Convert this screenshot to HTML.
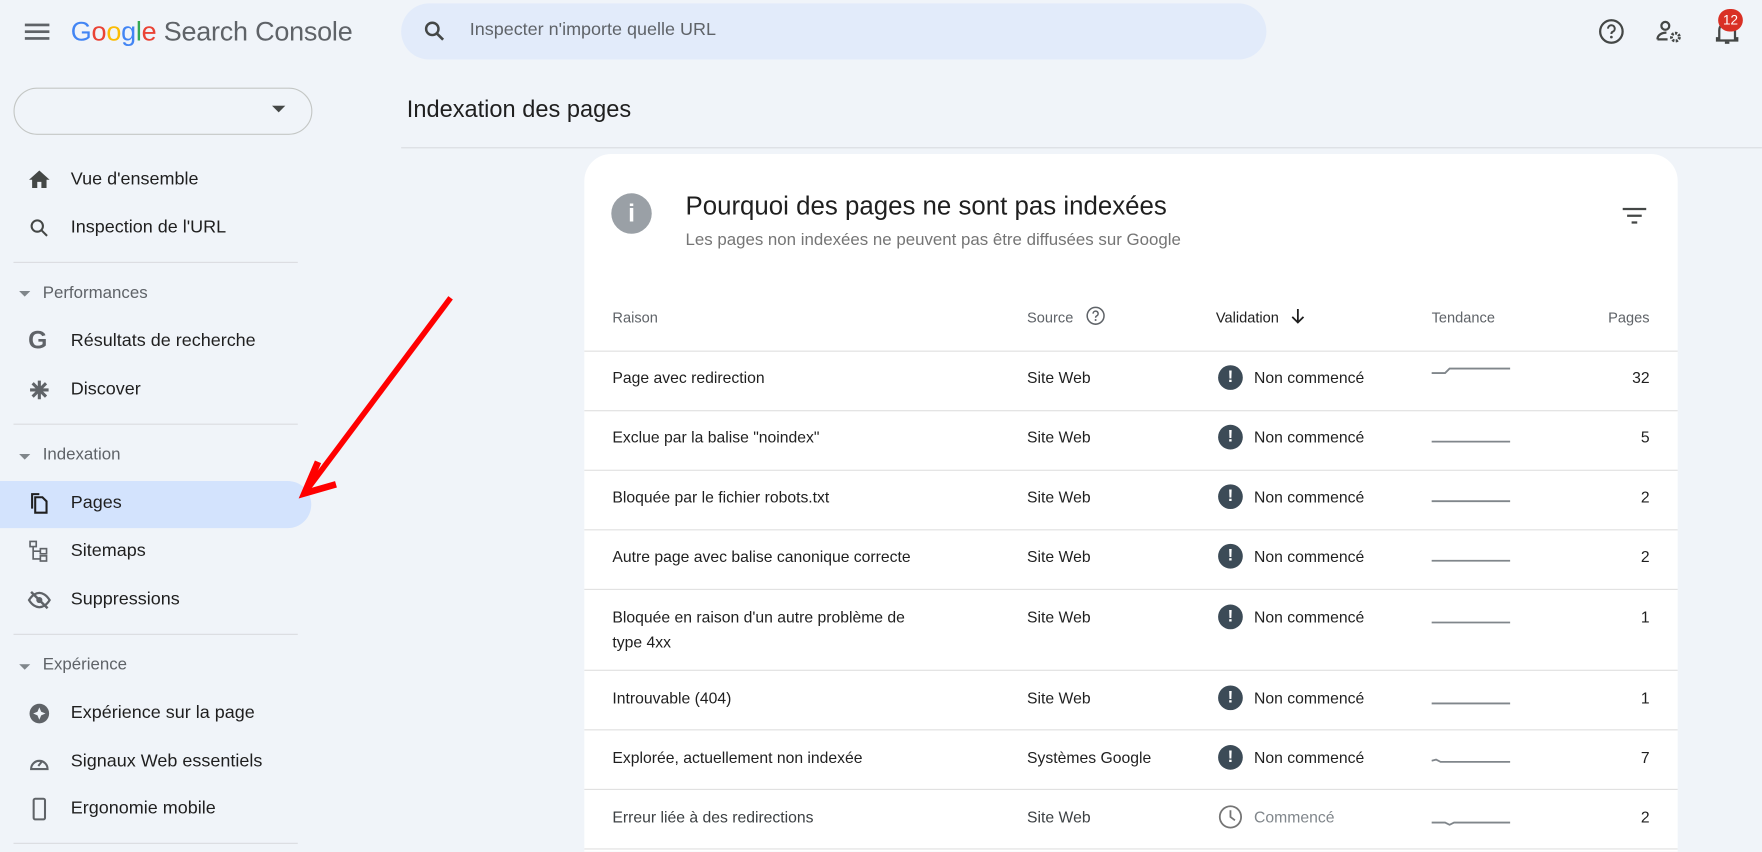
<!DOCTYPE html>
<html><head><meta charset="utf-8"><style>
html,body{margin:0;padding:0;width:1762px;height:852px;overflow:hidden;background:#f0f4f9;}
#w{position:absolute;left:0;top:0;width:1568px;height:758px;overflow:hidden;transform:scale(1.1237);transform-origin:0 0;font-family:"Liberation Sans",Arial,sans-serif;color:#1f1f1f;}
.a{position:absolute;white-space:nowrap;}
.nav{font-size:16px;color:#1f1f1f;}
.hdr{font-size:15px;color:#5f6368;}
.div{position:absolute;left:12px;width:253px;height:1px;background:#dadce0;}
.ic{position:absolute;left:24px;width:22px;height:22px;}
.row{position:absolute;left:520px;width:973px;height:1px;background:#e0e0e0;}
.t{font-size:14px;color:#1f1f1f;}
.bang{position:absolute;left:1084px;width:22px;height:22px;border-radius:50%;background:#3c4b57;color:#fff;font-weight:bold;font-size:15px;text-align:center;line-height:22px;}
.num{position:absolute;right:100px;font-size:14px;color:#1f1f1f;}
</style></head><body><div id="w">
<svg class="a" style="left:22px;top:19px" width="22" height="18"><g fill="#5f6368"><rect y="2" width="22" height="2.4"/><rect y="8" width="22" height="2.4"/><rect y="14" width="22" height="2.4"/></g></svg>
<div class="a" style="left:63px;top:15px;font-size:24px;letter-spacing:-0.2px"><span style="color:#4285f4">G</span><span style="color:#ea4335">o</span><span style="color:#fbbc05">o</span><span style="color:#4285f4">g</span><span style="color:#34a853">l</span><span style="color:#ea4335">e</span><span style="color:#5f6368"> Search Console</span></div>
<div class="a" style="left:357px;top:3px;width:770px;height:50px;border-radius:25px;background:#e2ebfa"></div>
<svg class="a" style="left:376px;top:17px" width="22" height="22" viewBox="0 0 24 24"><circle cx="9.5" cy="9.5" r="6" fill="none" stroke="#444746" stroke-width="2.4"/><path d="M14 14l6 6" stroke="#444746" stroke-width="2.6"/></svg>
<div class="a" style="left:418px;top:18px;font-size:16px;color:#5f6368">Inspecter n'importe quelle URL</div>
<svg class="a" style="left:1422px;top:16px" width="24" height="24" viewBox="0 0 24 24"><circle cx="12" cy="12" r="10" fill="none" stroke="#444746" stroke-width="2"/><path d="M9 9.5a3 3 0 1 1 4 2.8c-.8.4-1 1-1 2" fill="none" stroke="#444746" stroke-width="1.8"/><circle cx="12" cy="17" r="1.2" fill="#444746"/></svg>
<svg class="a" style="left:1473px;top:16px" width="26" height="24" viewBox="0 0 26 24"><circle cx="9" cy="7" r="3.5" fill="none" stroke="#444746" stroke-width="2"/><path d="M2 19c0-4 4-6 8-6" fill="none" stroke="#444746" stroke-width="2"/><path d="M2 19h9" stroke="#444746" stroke-width="2"/><circle cx="18" cy="17" r="3.5" fill="none" stroke="#444746" stroke-width="2.6" stroke-dasharray="2 1.2"/></svg>
<svg class="a" style="left:1526px;top:16px" width="22" height="24" viewBox="0 0 22 24"><path d="M4 18V11a7 7 0 0 1 14 0v7h2v2H2v-2z" fill="none" stroke="#444746" stroke-width="2"/><rect x="9" y="21" width="4" height="2" fill="#444746"/></svg>
<div class="a" style="left:1529px;top:8px;width:22px;height:20px;border-radius:10px;background:#d93025;color:#fff;font-size:12px;text-align:center;line-height:20px">12</div>
<div class="a" style="left:12px;top:78px;width:264px;height:40px;border:1px solid #c4c7c5;border-radius:21px"></div>
<svg class="a" style="left:242px;top:94px" width="12" height="7"><path d="M0 0h12L6 6z" fill="#444746"/></svg>
<svg class="ic" style="top:149px" viewBox="0 0 24 24"><path d="M10 20v-6h4v6h5v-8h3L12 3 2 12h3v8z" fill="#444746"/></svg>
<div class="a nav" style="left:63px;top:151px">Vue d'ensemble</div>
<svg class="ic" style="top:192px" viewBox="0 0 24 24"><circle cx="10" cy="10" r="5.5" fill="none" stroke="#444746" stroke-width="2"/><path d="M14 14l5.5 5.5" stroke="#444746" stroke-width="2"/></svg>
<div class="a nav" style="left:63px;top:194px">Inspection de l'URL</div>
<div class="div" style="top:233px"></div>
<svg class="a" style="left:17px;top:259px" width="10" height="6"><path d="M0 0h10L5 5z" fill="#80868b"/></svg>
<div class="a hdr" style="left:38px;top:252px">Performances</div>
<div class="a" style="left:25px;top:290px;font-size:22px;font-weight:bold;color:#5f6368">G</div>
<div class="a nav" style="left:63px;top:295px">Résultats de recherche</div>
<svg class="ic" style="top:336px" viewBox="0 0 24 24"><g stroke="#5f6368" stroke-width="3"><path d="M12 3v18M3 12h18M5.5 5.5l13 13M18.5 5.5l-13 13"/></g></svg>
<div class="a nav" style="left:63px;top:338px">Discover</div>
<div class="div" style="top:377px"></div>
<svg class="a" style="left:17px;top:404px" width="10" height="6"><path d="M0 0h10L5 5z" fill="#80868b"/></svg>
<div class="a hdr" style="left:38px;top:396px">Indexation</div>
<div class="a" style="left:0;top:428px;width:277px;height:42px;background:#d3e3fd;border-radius:0 21px 21px 0"></div>
<svg class="ic" style="top:437px" viewBox="0 0 24 24"><path d="M4 2h8v2H6v13H4z" fill="#1f1f1f"/><path d="M8 6h7l4 4v11H8z" fill="none" stroke="#1f1f1f" stroke-width="2"/></svg>
<div class="a nav" style="left:63px;top:439px">Pages</div>
<svg class="ic" style="top:480px" viewBox="0 0 24 24"><g fill="none" stroke="#5f6368" stroke-width="1.6"><rect x="3" y="2" width="6" height="5"/><rect x="13" y="9" width="6" height="5"/><rect x="13" y="16" width="6" height="5"/><path d="M6 7v12h7M6 11.5h7"/></g></svg>
<div class="a nav" style="left:63px;top:482px">Sitemaps</div>
<svg class="ic" style="top:523px" viewBox="0 0 24 24"><path d="M2 12c3-5 7-7 10-7s7 2 10 7c-3 5-7 7-10 7S5 17 2 12z" fill="none" stroke="#5f6368" stroke-width="2.2"/><circle cx="12" cy="12" r="3" fill="#5f6368"/><path d="M4 4l16 16" stroke="#5f6368" stroke-width="2.4"/></svg>
<div class="a nav" style="left:63px;top:525px">Suppressions</div>
<div class="div" style="top:564px"></div>
<svg class="a" style="left:17px;top:591px" width="10" height="6"><path d="M0 0h10L5 5z" fill="#80868b"/></svg>
<div class="a hdr" style="left:38px;top:583px">Expérience</div>
<svg class="ic" style="top:624px" viewBox="0 0 24 24"><circle cx="12" cy="12" r="9.5" fill="#5f6368"/><path d="M12 6l1.8 4.2L18 12l-4.2 1.8L12 18l-1.8-4.2L6 12l4.2-1.8z" fill="#f0f4f9"/></svg>
<div class="a nav" style="left:63px;top:626px">Expérience sur la page</div>
<svg class="ic" style="top:667px" viewBox="0 0 24 24"><path d="M4 19a8 8 0 1 1 16 0z" fill="none" stroke="#5f6368" stroke-width="2"/><path d="M11 16l4-5" stroke="#5f6368" stroke-width="2"/></svg>
<div class="a nav" style="left:63px;top:669px">Signaux Web essentiels</div>
<svg class="ic" style="top:709px" viewBox="0 0 24 24"><rect x="6.5" y="2" width="11" height="20" rx="1.5" fill="none" stroke="#5f6368" stroke-width="2"/></svg>
<div class="a nav" style="left:63px;top:711px">Ergonomie mobile</div>
<div class="div" style="top:750px"></div>
<div class="a" style="left:362px;top:86px;font-size:21px;color:#1f1f1f">Indexation des pages</div>
<div class="a" style="left:357px;top:131px;width:1211px;height:1px;background:#dadce0"></div>
<div class="a" style="left:520px;top:137px;width:973px;height:621px;background:#fff;border-radius:24px 24px 0 0"></div>
<div class="a" style="left:544px;top:172px;width:36px;height:36px;border-radius:50%;background:#9aa0a6;color:#fff;font-weight:bold;font-size:22px;text-align:center;line-height:36px">i</div>
<div class="a" style="left:610px;top:170px;font-size:23px;color:#1f1f1f">Pourquoi des pages ne sont pas indexées</div>
<div class="a" style="left:610px;top:205px;font-size:15px;color:#757575">Les pages non indexées ne peuvent pas être diffusées sur Google</div>
<svg class="a" style="left:1444px;top:184px" width="22" height="18"><g fill="#444746"><rect x="0" y="1" width="21" height="2"/><rect x="4" y="7" width="13" height="2"/><rect x="8" y="13" width="5" height="2"/></g></svg>
<div class="a" style="left:545px;top:275px;font-size:13px;color:#5f6368">Raison</div>
<div class="a" style="left:914px;top:275px;font-size:13px;color:#5f6368">Source</div>
<svg class="a" style="left:966px;top:272px" width="18" height="18" viewBox="0 0 24 24"><circle cx="12" cy="12" r="10" fill="none" stroke="#5f6368" stroke-width="1.8"/><path d="M9 9.5a3 3 0 1 1 4 2.8c-.8.4-1 1-1 2" fill="none" stroke="#5f6368" stroke-width="1.8"/><circle cx="12" cy="17" r="1.2" fill="#5f6368"/></svg>
<div class="a" style="left:1082px;top:275px;font-size:13px;color:#1f1f1f">Validation</div>
<svg class="a" style="left:1148px;top:274px" width="14" height="15"><path d="M7 1v12M2 8l5 5 5-5" fill="none" stroke="#1f1f1f" stroke-width="1.6"/></svg>
<div class="a" style="left:1274px;top:275px;font-size:13px;color:#5f6368">Tendance</div>
<div class="a" style="right:100px;top:275px;font-size:13px;color:#5f6368">Pages</div>
<div class="row" style="top:312px"></div><div class="row" style="top:365px"></div><div class="row" style="top:418px"></div><div class="row" style="top:471px"></div><div class="row" style="top:524px"></div><div class="row" style="top:596px"></div><div class="row" style="top:649px"></div><div class="row" style="top:702px"></div><div class="row" style="top:755px"></div>
<div class="a t" style="left:545px;top:328px">Page avec redirection</div>
<div class="a t" style="left:545px;top:381px">Exclue par la balise "noindex"</div>
<div class="a t" style="left:545px;top:434px">Bloquée par le fichier robots.txt</div>
<div class="a t" style="left:545px;top:487px">Autre page avec balise canonique correcte</div>
<div class="a t" style="left:545px;top:538px;line-height:22px;white-space:normal;width:280px">Bloquée en raison d'un autre problème de type 4xx</div>
<div class="a t" style="left:545px;top:613px">Introuvable (404)</div>
<div class="a t" style="left:545px;top:666px">Explorée, actuellement non indexée</div>
<div class="a t" style="left:545px;top:719px;color:#3c4043">Erreur liée à des redirections</div>
<div class="a t" style="left:914px;top:328px">Site Web</div>
<div class="a t" style="left:914px;top:381px">Site Web</div>
<div class="a t" style="left:914px;top:434px">Site Web</div>
<div class="a t" style="left:914px;top:487px">Site Web</div>
<div class="a t" style="left:914px;top:541px">Site Web</div>
<div class="a t" style="left:914px;top:613px">Site Web</div>
<div class="a t" style="left:914px;top:666px">Systèmes Google</div>
<div class="a t" style="left:914px;top:719px;color:#3c4043">Site Web</div>
<div class="bang" style="top:325px">!</div><div class="a t" style="left:1116px;top:328px">Non commencé</div>
<div class="bang" style="top:378px">!</div><div class="a t" style="left:1116px;top:381px">Non commencé</div>
<div class="bang" style="top:431px">!</div><div class="a t" style="left:1116px;top:434px">Non commencé</div>
<div class="bang" style="top:484px">!</div><div class="a t" style="left:1116px;top:487px">Non commencé</div>
<div class="bang" style="top:538px">!</div><div class="a t" style="left:1116px;top:541px">Non commencé</div>
<div class="bang" style="top:610px">!</div><div class="a t" style="left:1116px;top:613px">Non commencé</div>
<div class="bang" style="top:663px">!</div><div class="a t" style="left:1116px;top:666px">Non commencé</div>
<svg class="a" style="left:1084px;top:716px" width="22" height="22" viewBox="0 0 22 22"><circle cx="11" cy="11" r="9.5" fill="none" stroke="#757575" stroke-width="1.6"/><path d="M11 5v6l4 3" fill="none" stroke="#757575" stroke-width="1.6"/></svg>
<div class="a t" style="left:1116px;top:719px;color:#80868b">Commencé</div>
<svg class="a" style="left:1274px;top:320px" width="70" height="420" fill="none" stroke="#80868b" stroke-width="1.6">
<path d="M0 12h12l4-4h54"/>
<path d="M0 73h70"/>
<path d="M0 126h70"/>
<path d="M0 179h70"/>
<path d="M0 234h70"/>
<path d="M0 306h70"/>
<path d="M0 357l4-1 4 2h62"/>
<path d="M0 412h12l4 2 4-2h50"/>
</svg>
<div class="num" style="top:328px">32</div>
<div class="num" style="top:381px">5</div>
<div class="num" style="top:434px">2</div>
<div class="num" style="top:487px">2</div>
<div class="num" style="top:541px">1</div>
<div class="num" style="top:613px">1</div>
<div class="num" style="top:666px">7</div>
<div class="num" style="top:719px">2</div>
<svg class="a" style="left:255px;top:255px" width="160" height="200"><g stroke="#f00" stroke-width="5" fill="none"><path d="M146 10L18 181"/><path d="M28 156L16 184 44 176" stroke-width="6"/></g></svg>
</div></body></html>
